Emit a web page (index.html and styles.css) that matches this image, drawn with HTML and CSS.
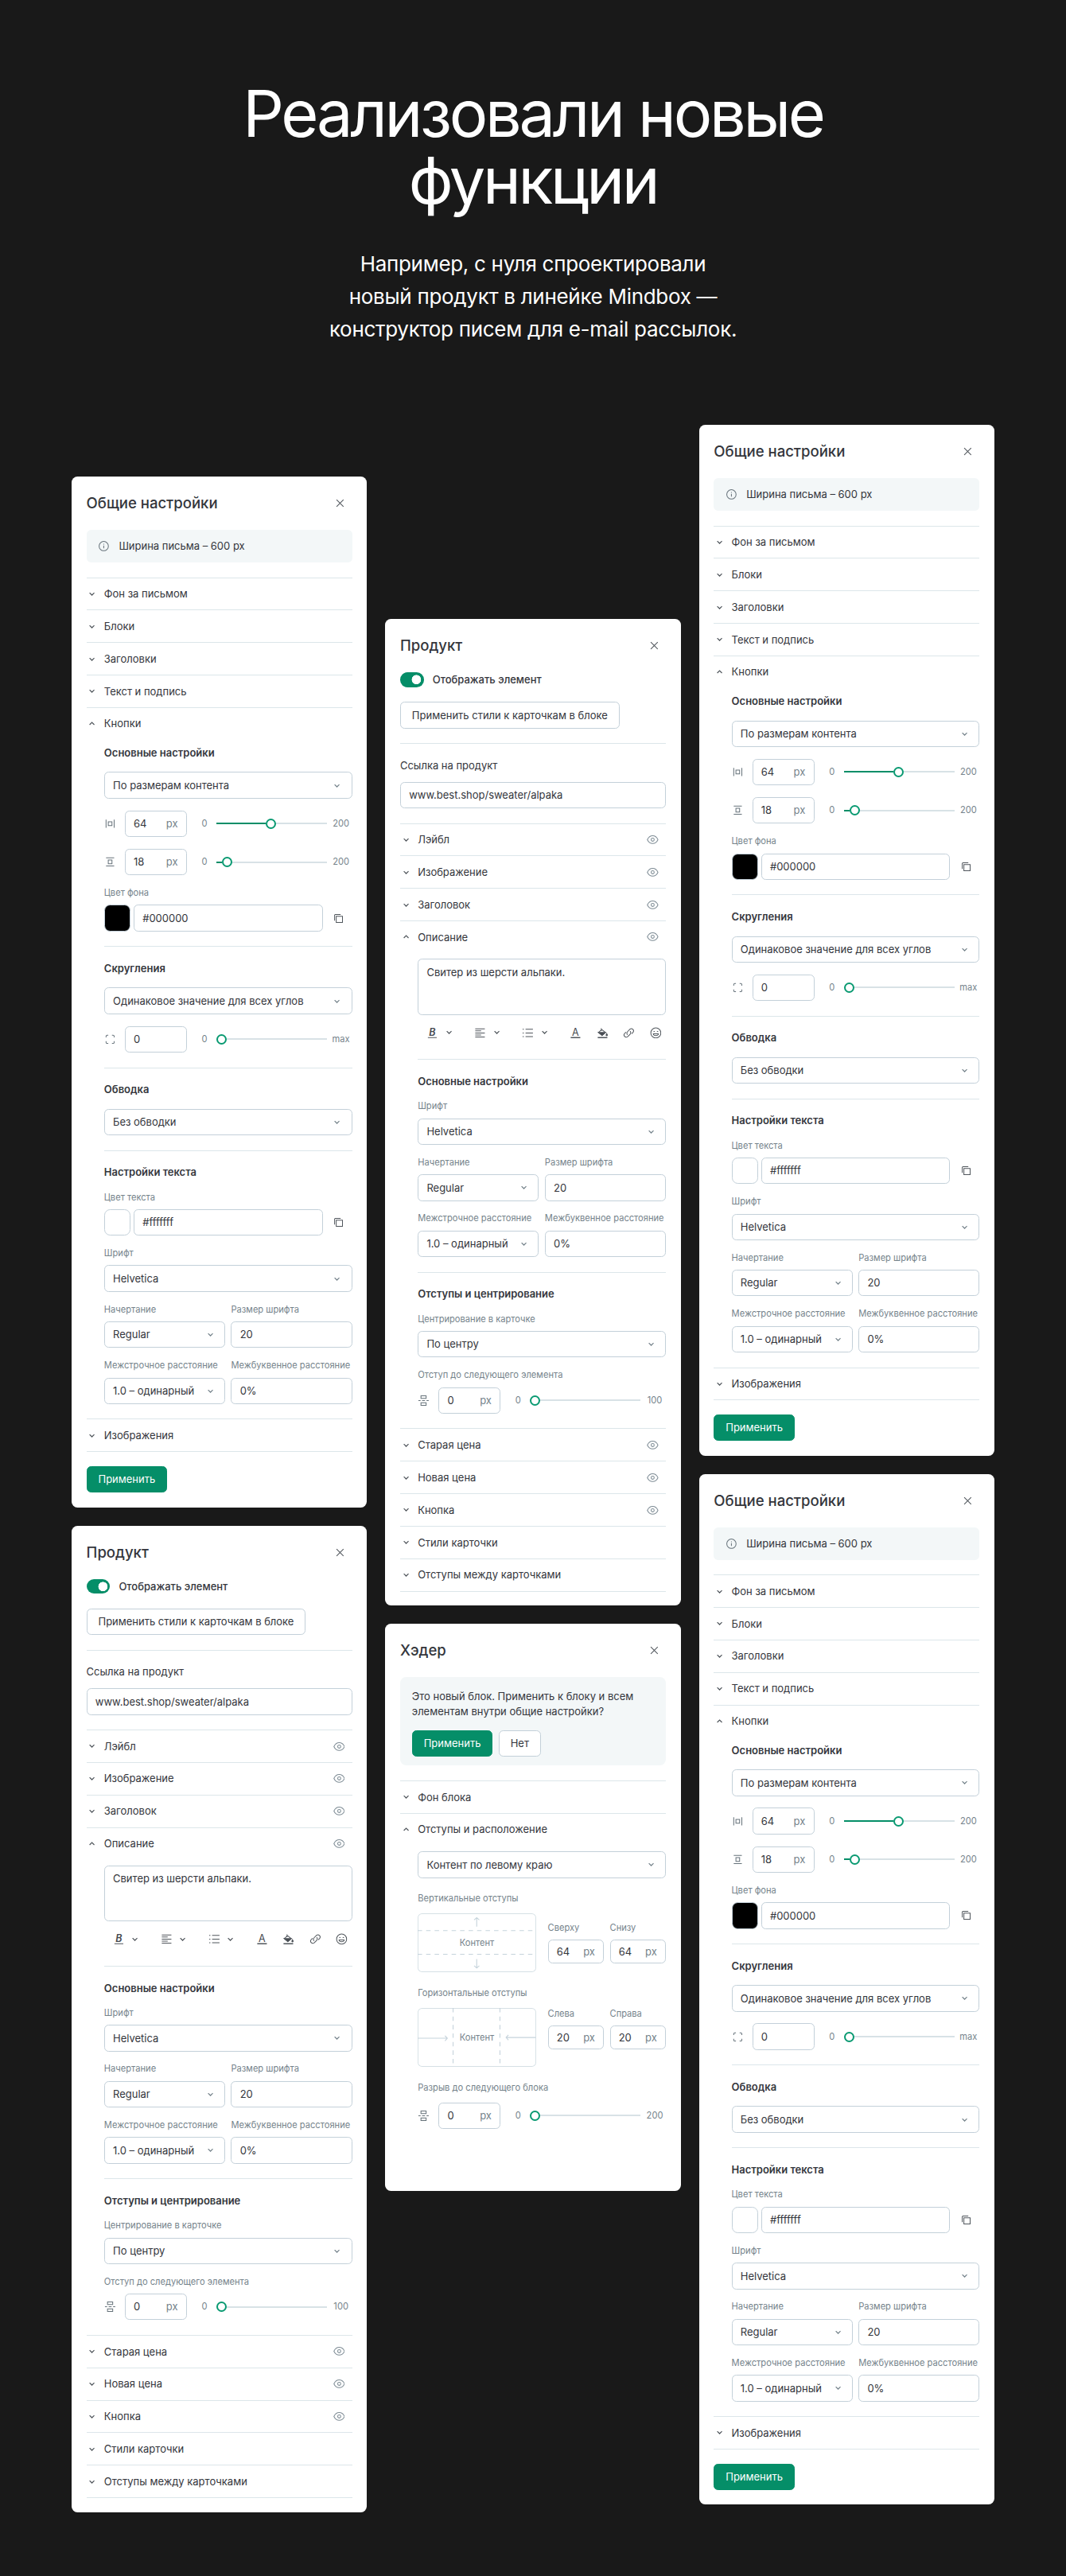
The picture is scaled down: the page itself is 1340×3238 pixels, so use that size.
FILE: index.html
```html
<!DOCTYPE html>
<html lang="ru">
<head>
    <meta charset="UTF-8">
    <meta name="viewport" content="width=device-width, initial-scale=1.0">
    <title>Конструктор писем</title>
    <link rel="stylesheet" href="styles.css">
</head>
<body>
    <!-- Icons -->
    <svg class="sprite">
        <symbol id="i-close" viewBox="0 0 16 16"><path d="M3.3 3.3l9.4 9.4M12.7 3.3l-9.4 9.4"/></symbol>
        <symbol id="i-info" viewBox="0 0 16 16"><circle cx="8" cy="8" r="6.3"/><path d="M8 7.2v3.9M8 4.9v1"/></symbol>
        <symbol id="i-down" viewBox="0 0 12 12"><path d="M2.8 4.5l3.2 3.1 3.2-3.1"/></symbol>
        <symbol id="i-up" viewBox="0 0 12 12"><path d="M2.8 7.5l3.2-3.1 3.2 3.1"/></symbol>
        <symbol id="i-eye" viewBox="0 0 16 16"><path d="M.8 8C2.4 4.6 5 2.8 8 2.8s5.6 1.8 7.2 5.2c-1.600 3.400-4.200 5.200-7.200 5.200S2.400 11.400.8 8z"/><circle cx="8" cy="8" r="2.1"/></symbol>
        <symbol id="i-width" viewBox="0 0 16 16"><path d="M2.5 2.5v11M13.5 2.5v11M5.5 5.5h5v5h-5z"/></symbol>
        <symbol id="i-height" viewBox="0 0 16 16"><path d="M2.5 2.5h11M2.5 13.500h11M5.5 5.5h5v5h-5z"/></symbol>
        <symbol id="i-corners" viewBox="0 0 16 16"><path d="M2.5 5.5V4A1.5 1.5 0 0 1 4 2.5h1.500M10.500 2.500H12A1.500 1.500 0 0 1 13.500 4v1.500M13.500 10.500V12a1.500 1.500 0 0 1-1.500 1.500h-1.500M5.500 13.500H4A1.500 1.500 0 0 1 2.500 12v-1.500"/></symbol>
        <symbol id="i-split" viewBox="0 0 16 16"><path d="M4.500 1.500h7V5h-7zM4.500 11h7v3.500h-7zM1 8h3M6 8h4M12 8h3"/></symbol>
        <symbol id="i-copy" viewBox="0 0 16 16"><path d="M5 5h8.500v8.500H5zM2.800 11V3.800a1 1 0 0 1 1-1H11"/></symbol>
        <symbol id="i-bold" viewBox="0 0 16 16"><text class="letter bold" x="8" y="11.600">B</text><path d="M2 14.300h12"/></symbol>
        <symbol id="i-align" viewBox="0 0 16 16"><path d="M1.500 2.500h13M1.500 5.200h8M1.500 8h13M1.500 10.800h8M1.500 13.500h13"/></symbol>
        <symbol id="i-list" viewBox="0 0 16 16"><path d="M1 3h1.600M1 8h1.600M1 13h1.600M5 3h10M5 8h10M5 13h10"/></symbol>
        <symbol id="i-color" viewBox="0 0 16 16"><text class="letter" x="8" y="11.400">A</text><path class="thick" d="M1.500 14.300h13"/></symbol>
        <symbol id="i-fill" viewBox="0 0 16 16"><path class="solid" d="M2.300 7.200h9.800l-4.700 4.200z"/><path d="M6.300 1.500v4M7 3.400l4.900 3.900-4.500 4L2.600 7.200 7 3.400"/><path class="thick" d="M1.500 14.300h13"/><path class="solid" d="M13.700 8.800l1 2a1 1 0 1 1-2 0z"/></symbol>
        <symbol id="i-link" viewBox="0 0 16 16"><path d="M6.300 10.500a3 3 0 0 1 0-4.300l3.300-3.300a3 3 0 0 1 4.200 4.200l-2 2M9.700 5.500a3 3 0 0 1 0 4.300l-3.300 3.300a3 3 0 0 1-4.200-4.200l2-2"/></symbol>
        <symbol id="i-smile" viewBox="0 0 16 16"><circle cx="8" cy="8" r="6.800"/><path d="M4.500 9.200c.5 3.300 6.500 3.300 7 0z"/><path class="thick" d="M5.700 5.300v1.300M10.300 5.300v1.300"/></symbol>
    </svg>

    <header class="hero">
        <h1>Реализовали новые<br>функции</h1>
        <p>Например, с нуля спроектировали<br>новый продукт в линейке Mindbox —<br>конструктор писем для e-mail рассылок.</p>
    </header>

    <main class="boards">
        <div class="column column-left">
            <section class="panel" data-template="general"></section>
            <section class="panel" data-template="product"></section>
        </div>
        <div class="column column-middle">
            <section class="panel" data-template="product"></section>
            <section class="panel panel-header">
                <div class="panel-head"><h2>Хэдер</h2><svg class="icon close"><use href="#i-close"/></svg></div>
                <div class="notice question">
                    <p>Это новый блок. Применить к блоку и всем элементам внутри общие настройки?</p>
                    <div class="buttons">
                        <button class="btn primary">Применить</button>
                        <button class="btn">Нет</button>
                    </div>
                </div>
                <div class="row"><svg class="chevron"><use href="#i-down"/></svg>Фон блока</div>
                <div class="row"><svg class="chevron"><use href="#i-up"/></svg>Отступы и расположение</div>
                <div class="row-body">
                    <div class="group">
                        <div class="field select">Контент по левому краю<svg class="chevron"><use href="#i-down"/></svg></div>
                    </div>
                    <div class="label spacing-label">Вертикальные отступы</div>
                    <div class="spacing centered">
                        <div class="scheme">
                            <svg viewBox="0 0 160 80"><path class="dash" d="M0 23.500h160M0 55.500h160"/><path d="M80 18V6M76.500 9L80 5.800 83.500 9M80 62v12M76.500 71l3.500 3.200 3.500-3.200"/></svg>
                            <span>Контент</span>
                        </div>
                        <div class="pair">
                            <div><div class="label">Сверху</div><div class="field small">64<i>px</i></div></div>
                            <div><div class="label">Снизу</div><div class="field small">64<i>px</i></div></div>
                        </div>
                    </div>
                    <div class="label spacing-label">Горизонтальные отступы</div>
                    <div class="spacing">
                        <div class="scheme">
                            <svg viewBox="0 0 160 80"><path class="dash" d="M48 0v80M111.500 0v80"/><path d="M0 41h40M37 37.500l3.200 3.500-3.200 3.500M160 40h-40M123 36.500l-3.200 3.500 3.200 3.500"/></svg>
                            <span>Контент</span>
                        </div>
                        <div class="pair">
                            <div><div class="label">Слева</div><div class="field small">20<i>px</i></div></div>
                            <div><div class="label">Справа</div><div class="field small">20<i>px</i></div></div>
                        </div>
                    </div>
                    <div class="label spacing-label">Разрыв до следующего блока</div>
                    <div class="slider-row">
                        <svg class="icon"><use href="#i-split"/></svg>
                        <div class="field number">0<i>px</i></div>
                        <span class="min">0</span>
                        <div class="track"><div class="progress" style="width: 0"></div><div class="knob"></div></div>
                        <span class="max">200</span>
                    </div>
                </div>
            </section>
        </div>
        <div class="column">
            <section class="panel" data-template="general"></section>
            <section class="panel" data-template="general"></section>
        </div>
    </main>

    <!-- General settings panel -->
    <template id="general">
        <div class="panel-head"><h2>Общие настройки</h2><svg class="icon close"><use href="#i-close"/></svg></div>
        <div class="notice"><svg class="icon"><use href="#i-info"/></svg>Ширина письма – 600 px</div>
        <div class="row"><svg class="chevron"><use href="#i-down"/></svg>Фон за письмом</div>
        <div class="row"><svg class="chevron"><use href="#i-down"/></svg>Блоки</div>
        <div class="row"><svg class="chevron"><use href="#i-down"/></svg>Заголовки</div>
        <div class="row"><svg class="chevron"><use href="#i-down"/></svg>Текст и подпись</div>
        <div class="row"><svg class="chevron"><use href="#i-up"/></svg>Кнопки</div>
        <div class="row-body">
            <div class="group">
                <h3>Основные настройки</h3>
                <div class="field select">По размерам контента<svg class="chevron"><use href="#i-down"/></svg></div>
                <div class="slider-row">
                    <svg class="icon"><use href="#i-width"/></svg>
                    <div class="field number">64<i>px</i></div>
                    <span class="min">0</span>
                    <div class="track"><div class="progress" style="width: 67px"></div><div class="knob"></div></div>
                    <span class="max">200</span>
                </div>
                <div class="slider-row">
                    <svg class="icon"><use href="#i-height"/></svg>
                    <div class="field number">18<i>px</i></div>
                    <span class="min">0</span>
                    <div class="track"><div class="progress" style="width: 8px"></div><div class="knob"></div></div>
                    <span class="max">200</span>
                </div>
                <div>
                    <div class="label">Цвет фона</div>
                    <div class="color-row"><div class="swatch black"></div><div class="field">#000000</div><svg class="icon"><use href="#i-copy"/></svg></div>
                </div>
            </div>
            <div class="group">
                <h3>Скругления</h3>
                <div class="field select">Одинаковое значение для всех углов<svg class="chevron"><use href="#i-down"/></svg></div>
                <div class="slider-row">
                    <svg class="icon"><use href="#i-corners"/></svg>
                    <div class="field number">0</div>
                    <span class="min">0</span>
                    <div class="track"><div class="progress" style="width: 0"></div><div class="knob"></div></div>
                    <span class="max">max</span>
                </div>
            </div>
            <div class="group">
                <h3>Обводка</h3>
                <div class="field select">Без обводки<svg class="chevron"><use href="#i-down"/></svg></div>
            </div>
            <div class="group">
                <h3>Настройки текста</h3>
                <div>
                    <div class="label">Цвет текста</div>
                    <div class="color-row"><div class="swatch"></div><div class="field">#fffffff</div><svg class="icon"><use href="#i-copy"/></svg></div>
                </div>
                <div>
                    <div class="label">Шрифт</div>
                    <div class="field select">Helvetica<svg class="chevron"><use href="#i-down"/></svg></div>
                </div>
                <div class="pair">
                    <div><div class="label">Начертание</div><div class="field select">Regular<svg class="chevron"><use href="#i-down"/></svg></div></div>
                    <div><div class="label">Размер шрифта</div><div class="field">20</div></div>
                </div>
                <div class="pair">
                    <div><div class="label">Межстрочное расстояние</div><div class="field select">1.0 – одинарный<svg class="chevron"><use href="#i-down"/></svg></div></div>
                    <div><div class="label">Межбуквенное расстояние</div><div class="field">0%</div></div>
                </div>
            </div>
        </div>
        <div class="row"><svg class="chevron"><use href="#i-down"/></svg>Изображения</div>
        <div class="panel-foot"><button class="btn primary">Применить</button></div>
    </template>

    <!-- Product panel -->
    <template id="product">
        <div class="panel-head"><h2>Продукт</h2><svg class="icon close"><use href="#i-close"/></svg></div>
        <div class="toggle-row"><div class="toggle"></div>Отображать элемент</div>
        <button class="btn apply-styles">Применить стили к карточкам в блоке</button>
        <div class="link-block">
            <div class="link-label">Ссылка на продукт</div>
            <div class="field">www.best.shop/sweater/alpaka</div>
        </div>
        <div class="row"><svg class="chevron"><use href="#i-down"/></svg>Лэйбл<svg class="icon eye"><use href="#i-eye"/></svg></div>
        <div class="row"><svg class="chevron"><use href="#i-down"/></svg>Изображение<svg class="icon eye"><use href="#i-eye"/></svg></div>
        <div class="row"><svg class="chevron"><use href="#i-down"/></svg>Заголовок<svg class="icon eye"><use href="#i-eye"/></svg></div>
        <div class="row"><svg class="chevron"><use href="#i-up"/></svg>Описание<svg class="icon eye"><use href="#i-eye"/></svg></div>
        <div class="row-body">
            <div class="group editor">
                <div class="field textarea">Свитер из шерсти альпаки.</div>
                <div class="toolbar">
                    <div class="tool"><svg class="icon"><use href="#i-bold"/></svg><svg class="chevron"><use href="#i-down"/></svg></div>
                    <div class="tool"><svg class="icon"><use href="#i-align"/></svg><svg class="chevron"><use href="#i-down"/></svg></div>
                    <div class="tool"><svg class="icon"><use href="#i-list"/></svg><svg class="chevron"><use href="#i-down"/></svg></div>
                    <div class="tools">
                        <svg class="icon"><use href="#i-color"/></svg>
                        <svg class="icon"><use href="#i-fill"/></svg>
                        <svg class="icon"><use href="#i-link"/></svg>
                        <svg class="icon"><use href="#i-smile"/></svg>
                    </div>
                </div>
            </div>
            <div class="group">
                <h3>Основные настройки</h3>
                <div>
                    <div class="label">Шрифт</div>
                    <div class="field select">Helvetica<svg class="chevron"><use href="#i-down"/></svg></div>
                </div>
                <div class="pair">
                    <div><div class="label">Начертание</div><div class="field select">Regular<svg class="chevron"><use href="#i-down"/></svg></div></div>
                    <div><div class="label">Размер шрифта</div><div class="field">20</div></div>
                </div>
                <div class="pair">
                    <div><div class="label">Межстрочное расстояние</div><div class="field select">1.0 – одинарный<svg class="chevron"><use href="#i-down"/></svg></div></div>
                    <div><div class="label">Межбуквенное расстояние</div><div class="field">0%</div></div>
                </div>
            </div>
            <div class="group">
                <h3>Отступы и центрирование</h3>
                <div>
                    <div class="label">Центрирование в карточке</div>
                    <div class="field select">По центру<svg class="chevron"><use href="#i-down"/></svg></div>
                </div>
                <div>
                    <div class="label">Отступ до следующего элемента</div>
                    <div class="slider-row">
                        <svg class="icon"><use href="#i-split"/></svg>
                        <div class="field number">0<i>px</i></div>
                        <span class="min">0</span>
                        <div class="track"><div class="progress" style="width: 0"></div><div class="knob"></div></div>
                        <span class="max">100</span>
                    </div>
                </div>
            </div>
        </div>
        <div class="row"><svg class="chevron"><use href="#i-down"/></svg>Старая цена<svg class="icon eye"><use href="#i-eye"/></svg></div>
        <div class="row"><svg class="chevron"><use href="#i-down"/></svg>Новая цена<svg class="icon eye"><use href="#i-eye"/></svg></div>
        <div class="row"><svg class="chevron"><use href="#i-down"/></svg>Кнопка<svg class="icon eye"><use href="#i-eye"/></svg></div>
        <div class="row"><svg class="chevron"><use href="#i-down"/></svg>Стили карточки</div>
        <div class="row"><svg class="chevron"><use href="#i-down"/></svg>Отступы между карточками</div>
        <div class="panel-foot"></div>
    </template>

    <script>
        // Fill the panels from their templates
        document.querySelectorAll('.panel[data-template]').forEach(panel => {
            const template = document.getElementById(panel.dataset.template);
            panel.appendChild(template.content.cloneNode(true));
        });
    </script>
</body>
</html>
```
FILE: styles.css
```css
* {
    box-sizing: border-box;
}

body {
    margin: 0;
    min-height: 3238px;
    background: #191919;
    font-family: Inter, "Liberation Sans", sans-serif;
    color: #34363c;
}

h1, h2, h3, p {
    margin: 0;
}

.sprite {
    position: absolute;
    width: 0;
    height: 0;
}

/* Hero */
.hero {
    height: 534.4px;
    padding-top: 101px;
    text-align: center;
    color: #fff;
}

.hero h1 {
    font-size: 81px;
    line-height: 84px;
    font-weight: 400;
    letter-spacing: -3.3px;
}

.hero p {
    margin-top: 42px;
    font-size: 26px;
    line-height: 41px;
    letter-spacing: -0.3px;
}

.boards {
    zoom: 0.928;
    display: flex;
    justify-content: center;
    align-items: flex-start;
    gap: 25px;
}

.column {
    display: flex;
    flex-direction: column;
    gap: 25px;
}

.column-left {
    padding-top: 70px;
}

.column-middle {
    padding-top: 263px;
}

.panel {
    width: 400px;
    padding: 20px 20px 0;
    border-radius: 8px;
    background: #fff;
    font-size: 14px;
    line-height: 20px;
}

.panel-header {
    height: 768px;
}

.panel-head {
    display: flex;
    align-items: center;
    justify-content: space-between;
    height: 32px;
    margin-bottom: 20px;
}

.panel-head h2 {
    font-size: 20px;
    line-height: 32px;
    font-weight: 500;
}

.icon, .chevron {
    display: block;
    flex: none;
    width: 16px;
    height: 16px;
    fill: none;
    stroke: #66727a;
    stroke-width: 1.1;
}

.chevron {
    width: 12px;
    height: 12px;
    stroke: #50565c;
    stroke-width: 1.3;
}

.close {
    margin-right: 8px;
    stroke: #50565c;
}

.thick {
    stroke-width: 1.6;
}

.solid {
    fill: #44484e;
}

.letter {
    font-size: 13.5px;
    text-anchor: middle;
    fill: #44484e;
    stroke: none;
}

.bold {
    font-weight: 600;
    font-style: italic;
}

/* Notices */
.notice {
    display: flex;
    align-items: center;
    gap: 12px;
    height: 44px;
    margin-bottom: 20px;
    padding: 0 16px;
    border-radius: 6px;
    background: #f3f7f8;
}

.question {
    display: block;
    height: 120px;
    padding: 16px 16px 12px;
    border-radius: 8px;
}

.buttons {
    display: flex;
    gap: 8px;
    margin-top: 16px;
}

.btn {
    display: block;
    height: 36px;
    padding: 0 15px;
    border: 1px solid #c3d0d9;
    border-radius: 6px;
    background: #fff;
    font: inherit;
    color: inherit;
}

.primary {
    border-color: #058e68;
    background: #058e68;
    color: #fff;
}

/* Accordion */
.row {
    display: flex;
    align-items: center;
    gap: 10px;
    height: 44px;
    padding: 0 10px 0 2px;
    border-top: 1px solid #dce6ea;
}

.eye {
    margin-left: auto;
    stroke: #7d8b94;
}

.row-body {
    padding: 8px 0 20px 24px;
}

.panel-foot {
    height: 76px;
    padding-top: 19px;
    border-top: 1px solid #dce6ea;
}

.panel-foot:empty {
    height: 20px;
    padding: 0;
}

/* Field groups */
.group {
    display: flex;
    flex-direction: column;
    gap: 16px;
}

.group + .group {
    margin-top: 20px;
    padding-top: 19px;
    border-top: 1px solid #dce6ea;
}

h3 {
    font-size: 14px;
    line-height: 20px;
    font-weight: 600;
}

.label {
    margin-bottom: 8px;
    font-size: 12px;
    line-height: 16px;
    color: #75838b;
    white-space: nowrap;
}

.field {
    display: flex;
    align-items: center;
    height: 36px;
    padding: 0 11px;
    border: 1px solid #c3d0d9;
    border-radius: 6px;
    background: #fff;
    white-space: nowrap;
}

.field i {
    margin-left: auto;
    font-style: normal;
    color: #75838b;
}

.select {
    justify-content: space-between;
    padding-right: 13px;
}

.select .chevron {
    stroke: #75838b;
}

.small {
    height: 32px;
}

.pair {
    display: flex;
    gap: 8px;
}

.pair > div {
    flex: 1;
    min-width: 0;
}

.color-row {
    display: flex;
    align-items: center;
    gap: 4px;
}

.color-row .field {
    width: 256px;
}

.color-row .icon {
    margin-left: 10px;
    stroke: #50565c;
}

.swatch {
    width: 36px;
    height: 36px;
    border: 1px solid #c3d0d9;
    border-radius: 8px;
}

.black {
    background: #000;
}

/* Sliders */
.slider-row {
    display: flex;
    align-items: center;
}

.number {
    width: 84px;
    margin-left: 12px;
}

.min, .max {
    font-size: 12px;
    text-align: center;
    color: #75838b;
}

.min {
    width: 24px;
    margin: 0 4px 0 12px;
}

.max {
    width: 30px;
    margin-left: 4px;
}

.track {
    display: flex;
    align-items: center;
    width: 150px;
    height: 14px;
    background: linear-gradient(#d8e2e6, #d8e2e6) center / 100% 2.2px no-repeat;
}

.progress {
    height: 2.2px;
    background: #058e68;
}

.knob {
    width: 14px;
    height: 14px;
    border: 2.2px solid #0a9a72;
    border-radius: 50%;
    background: #fff;
}

/* Product panel */
.toggle-row {
    display: flex;
    align-items: center;
    gap: 12px;
    height: 20px;
    margin-bottom: 20px;
    font-weight: 500;
}

.toggle {
    width: 32px;
    height: 20px;
    border-radius: 10px;
    background: radial-gradient(circle at 22px 10px, #fff 6px, #058e68 6.6px);
}

.apply-styles {
    margin-bottom: 20px;
}

.link-block {
    height: 108px;
    padding-top: 19px;
    border-top: 1px solid #dce6ea;
}

.link-label {
    margin-bottom: 12px;
}

.editor {
    gap: 8px;
}

.textarea {
    align-items: flex-start;
    height: 76px;
    padding-top: 7px;
}

.toolbar {
    display: flex;
    align-items: center;
    justify-content: space-between;
    height: 32px;
    padding: 0 6px 0 12px;
}

.toolbar .icon {
    stroke: #50565c;
}

.tool {
    display: flex;
    align-items: center;
    gap: 8px;
}

.tools {
    display: flex;
    gap: 20px;
}

/* Spacing schemes in the header panel */
.spacing-label {
    margin: 20px 0 12px;
}

.spacing {
    display: flex;
    align-items: flex-start;
    gap: 16px;
}

.centered {
    align-items: center;
}

.spacing .pair {
    flex: 1;
}

.scheme {
    display: grid;
    place-items: center;
    width: 160px;
    height: 80px;
    border-radius: 6px;
    box-shadow: inset 0 0 0 1px #d5e0e5;
    font-size: 12px;
    color: #75838b;
}

.scheme svg, .scheme span {
    grid-area: 1 / 1;
}

.scheme svg {
    width: 160px;
    height: 80px;
    fill: none;
    stroke: #c5d3db;
    stroke-width: 1.2;
}

.scheme .dash {
    stroke-dasharray: 6 5.5;
}
```
